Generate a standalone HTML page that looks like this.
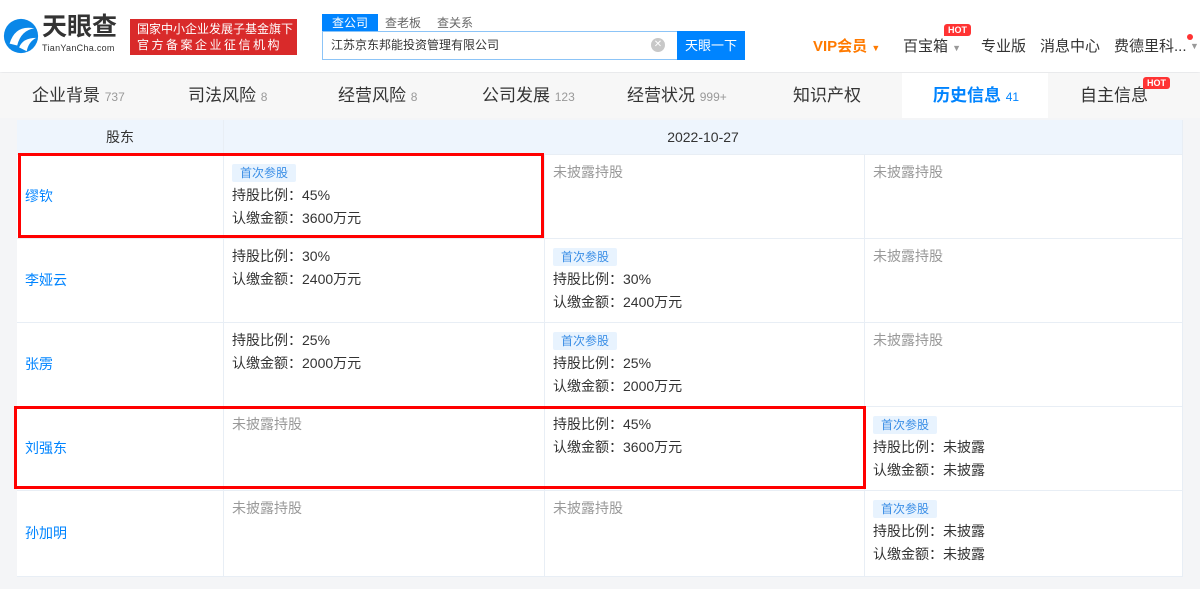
<!DOCTYPE html>
<html><head><meta charset="utf-8"><style>
*{margin:0;padding:0;box-sizing:border-box}
body{width:1200px;height:589px;overflow:hidden;background:#f4f5f7;font-family:"Liberation Sans","Noto Sans CJK SC",sans-serif;color:#333;position:relative}
.hdr{position:absolute;left:0;top:0;width:1200px;height:72px;background:#fff;box-shadow:0 2px 4px rgba(0,0,0,.06)}
.abs{position:absolute}
.tabs{position:absolute;top:73px;left:0;width:1200px;height:45px;background:#f7f7f7}
.tab{position:absolute;top:0;height:45px;line-height:45px;font-size:17px;color:#333}
.tab small{font-size:12px;color:#999}
.tbl{position:absolute;left:17px;top:120px;width:1166px;height:457px;background:#fff}
.cell{position:absolute;border-right:1px solid #e8eef5;border-bottom:1px solid #e8eef5;font-size:14px;color:#333;padding:6px 0 0 8px;line-height:23px}
.name{color:#0084ff;padding:0 0 0 8px;display:flex;align-items:center}
.gray{color:#999}
.badge{display:inline-block;background:#e8f3fe;color:#3a8ee6;font-size:12px;line-height:18px;padding:0 8px;border-radius:2px;margin-bottom:2px}
.red{position:absolute;border:3px solid #f00}
.hot{position:absolute;background:#f33;color:#fff;font-size:9px;font-weight:bold;line-height:12px;padding:0 4px;border-radius:3px 3px 3px 0}
</style></head><body>
<div class="hdr">
 <svg class="abs" style="left:2px;top:17px" width="38" height="38" viewBox="0 0 40 40"><circle cx="20" cy="20" r="18" fill="#0a87e8"/><path d="M8 28 Q14 8 34 12 Q20 14 16 30 Z" fill="#fff"/><path d="M18 32 Q22 22 36 22 Q28 26 26 36 Z" fill="#fff"/></svg>
 <div class="abs" style="left:42px;top:12px;font-size:25px;line-height:30px;font-weight:bold;color:#333">天眼查</div>
 <div class="abs" style="left:42px;top:43px;font-size:9px;line-height:10px;color:#333;letter-spacing:.3px">TianYanCha.com</div>
 <div class="abs" style="left:130px;top:19px;width:167px;height:36px;background:#d92a2a;color:#fff;font-size:12px;line-height:16px;padding:2px 0 0 7px">国家中小企业发展子基金旗下<br><span style="letter-spacing:2.5px">官方备案企业征信机构</span></div>
 <div class="abs" style="left:322px;top:14px;width:56px;height:18px;background:#0084ff;color:#fff;font-size:12px;line-height:18px;text-align:center">查公司</div>
 <div class="abs" style="left:385px;top:14px;font-size:12px;color:#666;line-height:18px">查老板</div>
 <div class="abs" style="left:437px;top:14px;font-size:12px;color:#666;line-height:18px">查关系</div>
 <div class="abs" style="left:322px;top:31px;width:356px;height:29px;border:1px solid #8cc4f7;background:#fff;font-size:12px;line-height:27px;padding-left:8px;color:#333">江苏京东邦能投资管理有限公司</div>
 <div class="abs" style="left:651px;top:38px;width:14px;height:14px;border-radius:50%;background:#c8c8c8;color:#fff;font-size:10px;line-height:14px;text-align:center">✕</div>
 <div class="abs" style="left:677px;top:31px;width:68px;height:29px;background:#0084ff;color:#fff;font-size:13px;line-height:29px;text-align:center">天眼一下</div>
 <div class="abs" style="left:813px;top:35px;font-size:15px;font-weight:bold;color:#ff7a00">VIP会员 <span style="font-size:9px">▼</span></div>
 <div class="abs" style="left:903px;top:35px;font-size:15px;color:#333">百宝箱 <span style="font-size:9px;color:#999">▼</span></div>
 <div class="hot" style="left:944px;top:24px">HOT</div>
 <div class="abs" style="left:981px;top:35px;font-size:15px;color:#333">专业版</div>
 <div class="abs" style="left:1040px;top:35px;font-size:15px;color:#333">消息中心</div>
 <div class="abs" style="left:1114px;top:35px;font-size:15px;color:#333">费德里科...</div>
 <div class="abs" style="left:1187px;top:34px;width:6px;height:6px;border-radius:50%;background:#f33"></div>
 <div class="abs" style="left:1190px;top:41px;font-size:9px;color:#999">▼</div>
</div>
<div class="tabs">
 <div class="tab" style="left:32px">企业背景 <small>737</small></div>
 <div class="tab" style="left:188px">司法风险 <small>8</small></div>
 <div class="tab" style="left:338px">经营风险 <small>8</small></div>
 <div class="tab" style="left:482px">公司发展 <small>123</small></div>
 <div class="tab" style="left:627px">经营状况 <small>999+</small></div>
 <div class="tab" style="left:793px">知识产权</div>
 <div class="abs" style="left:902px;top:0;width:146px;height:45px;background:#fff"></div>
 <div class="tab" style="left:933px;color:#0084ff;font-weight:bold">历史信息 <small style="color:#0084ff;font-weight:normal">41</small></div>
 <div class="tab" style="left:1080px">自主信息</div>
 <div class="hot" style="left:1143px;top:4px">HOT</div>
</div>
<div class="tbl">
 <div class="cell" style="left:0;top:0;width:207px;height:35px;background:#eef5fd;text-align:center;padding:6px 0 0">股东</div>
 <div class="cell" style="left:207px;top:0;width:959px;height:35px;background:#eef5fd;text-align:center;padding:6px 0 0">2022-10-27</div>

 <div class="cell name" style="left:0;top:35px;width:207px;height:84px">缪钦</div>
 <div class="cell" style="left:207px;top:35px;width:321px;height:84px"><span class="badge">首次参股</span><br>持股比例：45%<br>认缴金额：3600万元</div>
 <div class="cell gray" style="left:528px;top:35px;width:320px;height:84px">未披露持股</div>
 <div class="cell gray" style="left:848px;top:35px;width:318px;height:84px">未披露持股</div>

 <div class="cell name" style="left:0;top:119px;width:207px;height:84px">李娅云</div>
 <div class="cell" style="left:207px;top:119px;width:321px;height:84px">持股比例：30%<br>认缴金额：2400万元</div>
 <div class="cell" style="left:528px;top:119px;width:320px;height:84px"><span class="badge">首次参股</span><br>持股比例：30%<br>认缴金额：2400万元</div>
 <div class="cell gray" style="left:848px;top:119px;width:318px;height:84px">未披露持股</div>

 <div class="cell name" style="left:0;top:203px;width:207px;height:84px">张雳</div>
 <div class="cell" style="left:207px;top:203px;width:321px;height:84px">持股比例：25%<br>认缴金额：2000万元</div>
 <div class="cell" style="left:528px;top:203px;width:320px;height:84px"><span class="badge">首次参股</span><br>持股比例：25%<br>认缴金额：2000万元</div>
 <div class="cell gray" style="left:848px;top:203px;width:318px;height:84px">未披露持股</div>

 <div class="cell name" style="left:0;top:287px;width:207px;height:84px">刘强东</div>
 <div class="cell gray" style="left:207px;top:287px;width:321px;height:84px">未披露持股</div>
 <div class="cell" style="left:528px;top:287px;width:320px;height:84px">持股比例：45%<br>认缴金额：3600万元</div>
 <div class="cell" style="left:848px;top:287px;width:318px;height:84px"><span class="badge">首次参股</span><br>持股比例：未披露<br>认缴金额：未披露</div>

 <div class="cell name" style="left:0;top:371px;width:207px;height:86px">孙加明</div>
 <div class="cell gray" style="left:207px;top:371px;width:321px;height:86px">未披露持股</div>
 <div class="cell gray" style="left:528px;top:371px;width:320px;height:86px">未披露持股</div>
 <div class="cell" style="left:848px;top:371px;width:318px;height:86px"><span class="badge">首次参股</span><br>持股比例：未披露<br>认缴金额：未披露</div>
</div>
<div class="red" style="left:18px;top:153px;width:526px;height:85px"></div>
<div class="red" style="left:14px;top:406px;width:852px;height:83px"></div>
</body></html>
